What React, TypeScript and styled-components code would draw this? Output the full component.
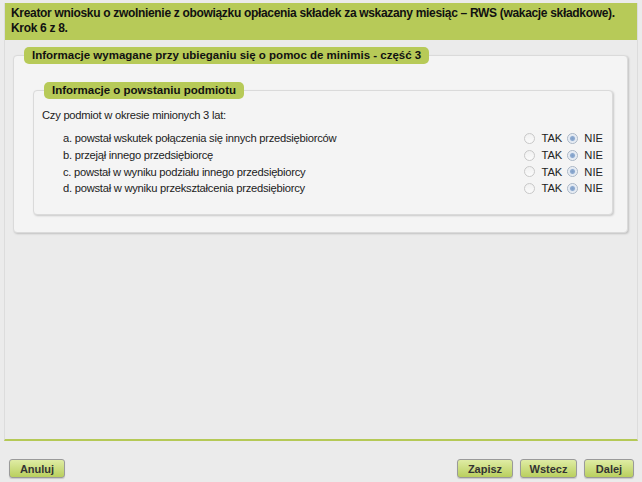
import styled, { createGlobalStyle } from 'styled-components';

const GlobalStyle = createGlobalStyle`
  html, body {
    margin: 0;
    padding: 0;
    background: #ebebeb;
  }
  body {
    font-family: 'Liberation Sans', Arial, sans-serif;
    font-size: 11.2px;
    color: #222;
  }
`;

const Page = styled.div`
  width: 642px;
  height: 482px;
  box-sizing: border-box;
  padding: 3px 4px 0 4px;
  display: flex;
  flex-direction: column;
`;

const Wizard = styled.div`
  height: 438px;
  box-sizing: border-box;
  background: #ebebeb;
  border-left: 1px solid #dcdcdc;
  border-right: 1px solid #dcdcdc;
  border-bottom: 2px solid #b5c956;
  display: flex;
  flex-direction: column;
`;

const Header = styled.div`
  background: #b7ca58;
  padding: 3px 6px 4px 6px;
  font-weight: bold;
  font-size: 12px;
  letter-spacing: -0.32px;
  line-height: 15px;
  color: #111;
`;

const Body = styled.div`
  padding: 7px 9px 0 8px;
`;

const Fieldset = styled.div<{ $inner?: boolean }>`
  position: relative;
  background: #f4f4f4;
  border: 1px solid #dadada;
  border-radius: 4px;
  box-shadow: 1px 1px 2px rgba(0, 0, 0, 0.18);
  margin-top: 8px;
  padding: ${p => (p.$inner ? '16px 9px 17px 8px' : '26px 14px 17px 19px')};
`;

const Legend = styled.div`
  position: absolute;
  top: -9px;
  left: 10px;
  background: #b7ca58;
  border-radius: 5px;
  padding: 0 8px;
  height: 17px;
  line-height: 17px;
  font-weight: bold;
  font-size: 11.5px;
  color: #111;
`;

const Question = styled.div`
  line-height: 16px;
  margin-bottom: 7px;
  letter-spacing: -0.25px;
`;

const Row = styled.div`
  display: flex;
  align-items: center;
  height: 16.7px;
  padding-left: 21px;
`;

const Label = styled.div`
  flex: 1;
  letter-spacing: -0.25px;
`;

const Options = styled.div`
  display: flex;
  align-items: center;
`;

const Radio = styled.span<{ $checked?: boolean }>`
  width: 11px;
  height: 11px;
  box-sizing: border-box;
  border-radius: 50%;
  border: 1px solid ${p => (p.$checked ? '#a9b6c6' : '#c8c8c8')};
  background: ${p =>
    p.$checked
      ? 'radial-gradient(circle, #7f9fc8 0, #8fabd0 2px, #dfe7f1 3px, #f4f6f9 5px)'
      : 'linear-gradient(#f0f0f0, #fbfbfb)'};
  margin-right: 6px;
`;

const OptText = styled.span`
  margin-right: 5px;
  &:last-child {
    margin-right: 0;
  }
`;

const Footer = styled.div`
  display: flex;
  justify-content: space-between;
  padding: 18px 4px 0 5px;
`;

const ButtonGroup = styled.div`
  display: flex;
  gap: 7px;
`;

const Button = styled.button<{ $w: number }>`
  width: ${p => p.$w}px;
  height: 19px;
  padding: 0;
  border: 1px solid #9a9a9a;
  border-radius: 3px;
  background: linear-gradient(#dfeca4, #b9cf5e);
  box-shadow: 0 1px 1px rgba(0, 0, 0, 0.15);
  font-family: inherit;
  font-weight: bold;
  font-size: 11px;
  color: #333;
`;

const items = [
  'a. powstał wskutek połączenia się innych przedsiębiorców',
  'b. przejął innego przedsiębiorcę',
  'c. powstał w wyniku podziału innego przedsiębiorcy',
  'd. powstał w wyniku przekształcenia przedsiębiorcy',
];

export default function App() {
  return (
    <>
      <GlobalStyle />
      <Page>
        <Wizard>
          <Header>
            Kreator wniosku o zwolnienie z obowiązku opłacenia składek za wskazany miesiąc – RWS
            (wakacje składkowe).
            <br />
            Krok 6 z 8.
          </Header>
          <Body>
            <Fieldset>
              <Legend>Informacje wymagane przy ubieganiu się o pomoc de minimis - część 3</Legend>
              <Fieldset $inner>
                <Legend>Informacje o powstaniu podmiotu</Legend>
                <Question>Czy podmiot w okresie minionych 3 lat:</Question>
                {items.map(item => (
                  <Row key={item}>
                    <Label>{item}</Label>
                    <Options>
                      <Radio />
                      <OptText>TAK</OptText>
                      <Radio $checked />
                      <OptText>NIE</OptText>
                    </Options>
                  </Row>
                ))}
              </Fieldset>
            </Fieldset>
          </Body>
        </Wizard>
        <Footer>
          <Button $w={56}>Anuluj</Button>
          <ButtonGroup>
            <Button $w={56}>Zapisz</Button>
            <Button $w={57}>Wstecz</Button>
            <Button $w={50}>Dalej</Button>
          </ButtonGroup>
        </Footer>
      </Page>
    </>
  );
}
